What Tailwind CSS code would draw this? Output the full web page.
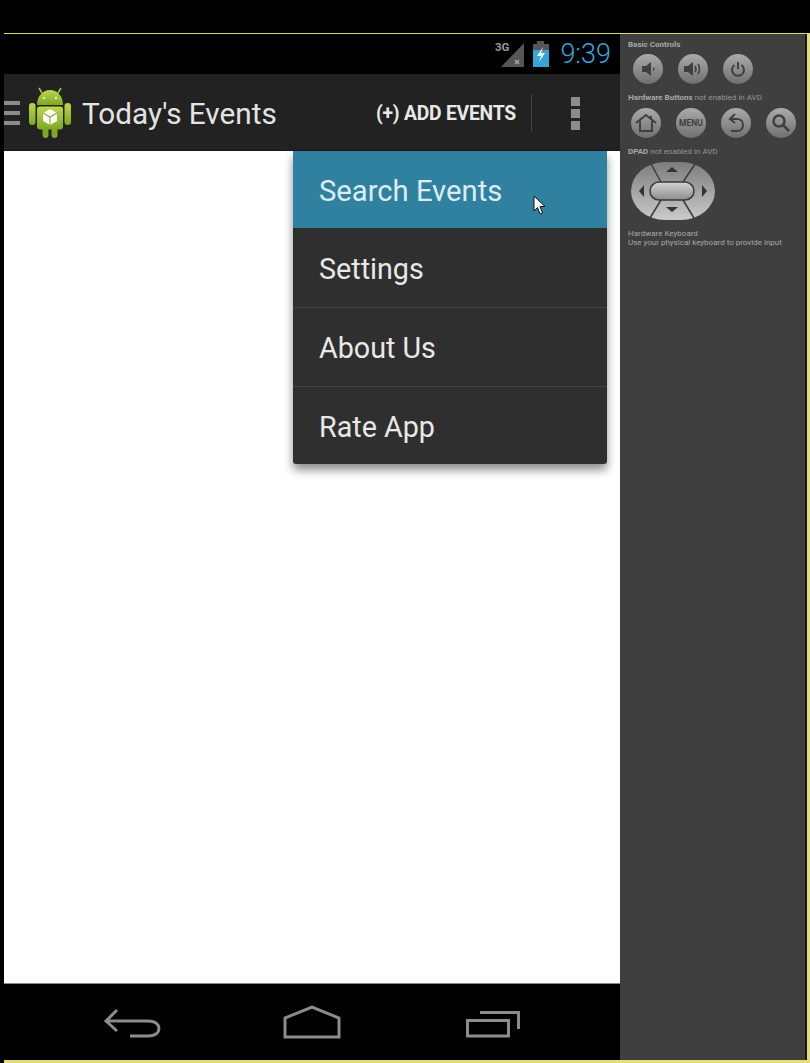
<!DOCTYPE html>
<html lang="en">
<head>
    <meta charset="UTF-8">
    <title>Today's Events</title>
    <script src="https://cdn.jsdelivr.net/npm/@tailwindcss/browser@4"></script>
</head>
<body class="bg-black font-['Roboto',sans-serif]">
    <div class="w-[810px] h-[1063px] flex flex-col overflow-hidden bg-black pl-[4px]">
        <!-- Top black strip -->
        <div class="h-[33px] shrink-0"></div>

        <!-- Emulator window -->
        <div class="h-[1030px] flex flex-col border-t border-[#dcd47c]">
            <div class="h-[1026px] flex">
                <!-- Device screen -->
                <div class="w-[616px] flex flex-col relative">
                    <!-- Status bar -->
                    <div class="h-[40px] bg-black flex items-center justify-end">
                        <span class="text-[11.5px] font-bold text-[#999] mr-[-9px] mb-[13px]">3G</span>
                        <svg width="25" height="26" viewBox="0 0 25 26" class="mr-[7px] mt-[2px]">
                            <path d="M24 1V25H1Z" fill="#555"/>
                            <path d="M15 18l4 4M19 18l-4 4" stroke="#aaa" stroke-width="1.2"/>
                        </svg>
                        <svg width="18" height="26" viewBox="0 0 18 26" class="mr-[10px]">
                            <path d="M5 0H12V3H17V26H1V3H5Z" fill="#555"/>
                            <path d="M1 9H17V26H1Z" fill="#33a5d6"/>
                            <path d="M11 6L5 15H9L7 21L13 12H9Z" fill="#fff"/>
                        </svg>
                        <span class="text-[27px] leading-none text-[#33a8dc] font-light mr-[9px] mt-[1px]">9:39</span>
                    </div>

                    <!-- Action bar -->
                    <div class="h-[77px] bg-[#222222] flex items-center border-b border-[#171717] pt-[2px]">
                        <div class="w-[16px] flex flex-col gap-[6px]">
                            <div class="h-[4px] bg-[#8c8c8c]"></div>
                            <div class="h-[4px] bg-[#8c8c8c]"></div>
                            <div class="h-[4px] bg-[#8c8c8c]"></div>
                        </div>
                        <svg width="46" height="52" viewBox="0 0 46 52" class="ml-[7px] mr-[9px]">
                            <defs>
                                <linearGradient id="droid" x1="0" y1="0" x2="0" y2="1">
                                    <stop offset="0" stop-color="#bcd84a"/>
                                    <stop offset="1" stop-color="#7fa824"/>
                                </linearGradient>
                            </defs>
                            <path d="M15 6L12 1M31 6L34 1" stroke="#a8c838" stroke-width="1.5"/>
                            <path d="M10 18C10 9 16 3 23 3S36 9 36 18Z" fill="url(#droid)"/>
                            <circle cx="17" cy="11" r="1.2" fill="#e8f0c0"/>
                            <circle cx="29" cy="11" r="1.2" fill="#e8f0c0"/>
                            <rect x="10" y="19.5" width="26" height="23" rx="3" fill="url(#droid)"/>
                            <rect x="2" y="16" width="6.5" height="22" rx="3.2" fill="url(#droid)"/>
                            <rect x="37.5" y="16" width="6.5" height="22" rx="3.2" fill="url(#droid)"/>
                            <rect x="15.5" y="40" width="6" height="11" rx="3" fill="#7fa824"/>
                            <rect x="24.5" y="40" width="6" height="11" rx="3" fill="#7fa824"/>
                            <path d="M23 22L30 26V34L23 38L16 34V26Z" fill="#fff"/>
                            <path d="M16 26L23 30L30 26M23 30V38" stroke="#86a82a" stroke-width="1.1" fill="none"/>
                        </svg>
                        <span class="text-[29.7px] leading-none text-[#e4e4e4] mt-[1px]">Today's Events</span>
                        <span class="ml-auto text-[19.3px] font-bold text-[#e8e8e8] tracking-[-0.2px] mt-[2px]">(+) ADD EVENTS</span>
                        <div class="w-px h-[38px] bg-[#444] ml-[15px]"></div>
                        <div class="flex flex-col gap-[3px] ml-[39px] mr-[40px]">
                            <div class="w-[9px] h-[9px] bg-[#8c8c8c]"></div>
                            <div class="w-[9px] h-[9px] bg-[#8c8c8c]"></div>
                            <div class="w-[9px] h-[9px] bg-[#8c8c8c]"></div>
                        </div>
                    </div>

                    <!-- Content -->
                    <div class="flex-1 bg-white relative">
                        <!-- Overflow menu -->
                        <div class="absolute left-[289px] top-[0px] w-[314px] rounded-b-[3px] bg-[#2f2f2f] text-[28.7px] text-[#e8e8e8] shadow-[0_6px_10px_rgba(0,0,0,0.45)]">
                            <div class="h-[77px] bg-[#30809f] flex items-center pl-[26px] pt-[5px] text-[29.2px] text-[#dcecf3]">Search Events</div>
                            <div class="h-[80px] flex items-center pl-[26px] pt-[4px] border-b border-[#454545]">Settings</div>
                            <div class="h-[79px] flex items-center pl-[26px] pt-[4px] border-b border-[#454545]">About Us</div>
                            <div class="h-[77px] flex items-center pl-[26px] pt-[5px]">Rate App</div>
                        </div>
                        <!-- Mouse pointer -->
                        <svg width="13" height="20" viewBox="0 0 13 20" class="absolute left-[529px] top-[44px]">
                            <path d="M1 1V16L4.5 12.5L7 19L9.5 18L7 11.5H12Z" fill="#fff" stroke="#111" stroke-width="1"/>
                        </svg>
                    </div>

                    <!-- Navigation bar -->
                    <div class="h-[77px] bg-black border-t border-[#8a8a8a] flex">
                        <svg width="616" height="76" viewBox="0 0 616 76" fill="none" stroke="#8c8c8c" stroke-width="3">
                            <path d="M113 26L102 37L113 47M102 37H144C152 37 155 41 155 44.5C155 48 152 52 144 52H126"/>
                            <path d="M281 53V34L308 23L335 34V53Z"/>
                            <path d="M463.5 36.5H504.5V52H463.5ZM476 28.5H514.5V45"/>
                        </svg>
                    </div>
                </div>

                <!-- Emulator controls -->
                <div class="w-[185px] bg-[#3f3f3f] pl-[8px] pt-[6px] text-[8px] font-bold leading-[10px] text-[#a8a8a8]">
                    <p>Basic Controls</p>
                    <div class="flex gap-[15px] mt-[4px] ml-[5px]">
                        <div class="w-[30px] h-[30px] rounded-full bg-linear-to-b from-[#ababab] to-[#707070] flex items-center justify-center">
                            <svg width="16" height="16" viewBox="0 0 16 16" fill="#3f3f3f"><path d="M2 5H6L11 1V15L6 11H2ZM13 6L15 8L13 10Z"/></svg>
                        </div>
                        <div class="w-[30px] h-[30px] rounded-full bg-linear-to-b from-[#ababab] to-[#707070] flex items-center justify-center">
                            <svg width="20" height="16" viewBox="0 0 20 16" fill="none"><path d="M1 5H5L10 1V15L5 11H1Z" fill="#3f3f3f"/><path d="M12 5Q14 8 12 11M15 3Q18 8 15 13" stroke="#3f3f3f" stroke-width="1.5"/></svg>
                        </div>
                        <div class="w-[30px] h-[30px] rounded-full bg-linear-to-b from-[#ababab] to-[#707070] flex items-center justify-center">
                            <svg width="16" height="16" viewBox="0 0 16 16" fill="none" stroke="#3f3f3f" stroke-width="2"><path d="M8 1V8M4.5 4A6 6 0 1 0 11.5 4"/></svg>
                        </div>
                    </div>
                    <p class="mt-[9px]">Hardware Buttons <span class="font-normal text-[#969696]">not enabled in AVD</span></p>
                    <div class="flex gap-[15px] mt-[5px] ml-[3px]">
                        <div class="w-[30px] h-[30px] rounded-full bg-linear-to-b from-[#ababab] to-[#707070] flex items-center justify-center">
                            <svg width="22" height="20" viewBox="0 0 22 20" fill="none" stroke="#3f3f3f" stroke-width="2"><path d="M1 10L11 2L21 10M5 8V18H17V8M16 3V7"/></svg>
                        </div>
                        <div class="w-[30px] h-[30px] rounded-full bg-linear-to-b from-[#ababab] to-[#707070] flex items-center justify-center">
                            <span class="text-[8.5px] text-[#3f3f3f]">MENU</span>
                        </div>
                        <div class="w-[30px] h-[30px] rounded-full bg-linear-to-b from-[#ababab] to-[#707070] flex items-center justify-center">
                            <svg width="18" height="20" viewBox="0 0 18 20" fill="none" stroke="#3f3f3f" stroke-width="2"><path d="M8 1L3 6L8 10M3 6H10C14 6 16 9 16 12S14 18 10 18H4"/></svg>
                        </div>
                        <div class="w-[30px] h-[30px] rounded-full bg-linear-to-b from-[#ababab] to-[#707070] flex items-center justify-center">
                            <svg width="20" height="20" viewBox="0 0 20 20" fill="none" stroke="#3f3f3f" stroke-width="2.5"><circle cx="8" cy="8" r="5.5"/><path d="M12 12L18 18"/></svg>
                        </div>
                    </div>
                    <p class="mt-[9px]">DPAD <span class="font-normal text-[#969696]">not enabled in AVD</span></p>
                    <svg width="84" height="58" viewBox="0 0 84 58" class="mt-[5px] ml-[3px]">
                        <defs>
                            <linearGradient id="pad" x1="0" y1="0" x2="0" y2="1">
                                <stop offset="0" stop-color="#7c7c7c"/>
                                <stop offset="1" stop-color="#cacaca"/>
                            </linearGradient>
                            <linearGradient id="padKey" x1="0" y1="0" x2="0" y2="1">
                                <stop offset="0" stop-color="#d4d4d4"/>
                                <stop offset="1" stop-color="#8c8c8c"/>
                            </linearGradient>
                        </defs>
                        <rect x="0" y="0" width="84" height="58" rx="34" ry="29" fill="url(#pad)"/>
                        <path d="M20 2L30 20M64 2L52 20M30 38L19 56M52 38L63 56" stroke="#3a3a3a" stroke-width="1.5"/>
                        <rect x="19" y="20" width="44" height="18" rx="9" fill="url(#padKey)" stroke="#3a3a3a" stroke-width="1.5"/>
                        <path d="M41 5L47 10H35ZM41 50L35 45H47ZM8 29L13 23V35ZM76 29L71 23V35Z" fill="#333"/>
                    </svg>
                    <p class="mt-[9px] font-normal leading-[9px]">Hardware Keyboard<br>Use your physical keyboard to provide input</p>
                </div>
                <div class="w-[2px] bg-[#141414]"></div>
                <div class="w-[3px] bg-[#e6dc70]"></div>
            </div>

            <!-- Bottom strip -->
            <div class="h-[3px] bg-[#e6dc70]"></div>
        </div>
    </div>
</body>
</html>
